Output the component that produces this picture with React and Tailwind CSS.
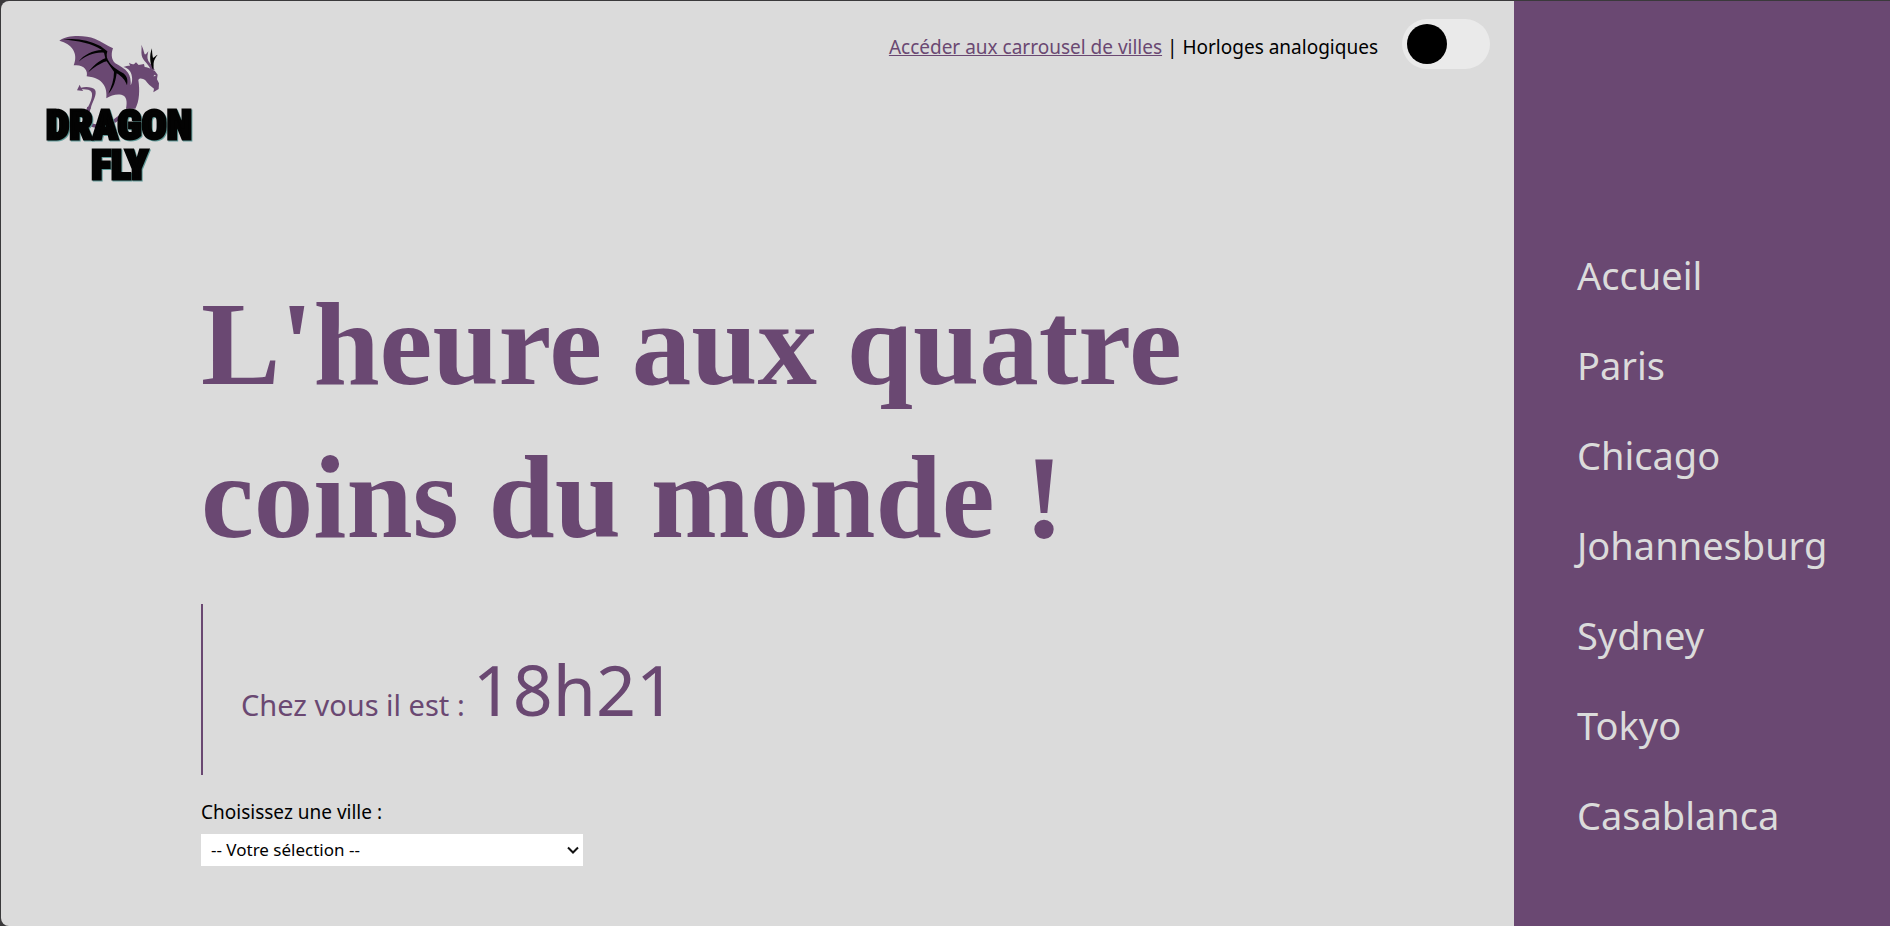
import { useState } from "react";

const cities = ["Paris", "Chicago", "Johannesburg", "Sydney", "Tokyo", "Casablanca"];

function Logo() {
  return (
    <svg viewBox="-3 -3 540 540" className="size-[180px]" role="img" aria-label="Dragon Fly">
      <g fill="#6a4872">
        <path d="M88 62C112 44 165 45 194 56C214 64 230 76 249 85C244 98 242 118 256 130C270 138 285 146 294 158C301 168 303 182 302 196C309 184 307 166 301 155C295 146 288 143 280 141C287 138 294 137 300 137L297 128C302 132 308 133 312 133L318 127L326 135L342 132L344 141C351 142 358 144 362 147L374 152L383 164L381 178L387 190L386 207L370 217L372 206C362 199 354 192 346 181C338 175 329 173 325 180C330 210 328 245 316 266H288C292 246 291 228 274 224C258 221 243 226 229 235C232 205 222 174 170 169C175 150 160 132 131 136C146 100 126 72 88 62Z" />
        <path d="M362 149C356 132 338 122 335 106C333 95 336 86 334 74C339 84 341 93 344 103C349 104 351 99 355 94C353 104 350 112 355 123C360 131 370 139 374 150Z" />
        <path d="M171 266C184 245 192 219 181 212C173 208 164 209 155 208L160 213L141 211L149 194L153 203C168 199 188 201 195 209C203 223 186 245 182 266Z" />
      </g>
      <path d="M177 262C166 294 175 320 202 318C233 317 251 307 274 288" fill="none" stroke="#6a4872" strokeWidth="11" />
      <path d="M370 169L378 168L374 164Z" fill="#dbdbdb" />
      <g fill="#030303">
        <path d="M99 59C137 53 175 60 211 78L222 86L232 94C228 107 230 117 239 128C249 143 266 151 280 160C292 169 294 181 291 196C285 180 278 171 260 160C257 180 252 205 235 221C245 199 252 178 252 155L230 124C208 130 192 143 175 157C187 139 206 123 226 115L222 98C191 96 169 107 146 125C160 105 188 91 216 90C187 70 143 61 99 59Z" />
        <path d="M369 149C360 132 357 106 366 85C366 96 367 104 369 114C374 111 376 107 383 104C377 111 374 118 372 123C369 133 373 141 369 149Z" />
      </g>
      <g
        className="drop-shadow-[3px_3px_0_#5f9a98]"
        textAnchor="middle"
        fontFamily="'Liberation Sans Narrow', 'Roboto Condensed', 'Liberation Sans', sans-serif"
        fontWeight="900"
        fontSize="124"
        fill="#030303"
        stroke="#030303"
        strokeWidth="9"
      >
        <text x="267" y="358">DRAGON</text>
        <text x="269" y="477">FLY</text>
      </g>
    </svg>
  );
}

export default function App() {
  const [analog, setAnalog] = useState(false);
  return (
    <div className="flex min-h-screen bg-[#3a393b] font-['Noto_Sans',sans-serif]">
      <div className="flex min-h-screen flex-1 border-t border-l border-[#3a393b]">
        <div className="flex-1 rounded-l-lg bg-[#dbdbdb]">
          <header className="flex items-start justify-between pt-[18px] pr-6 pl-7">
            <a href="#accueil">
              <Logo />
            </a>
            <div className="flex items-center gap-6 text-[19px]">
              <p className="pt-1.5">
                <a href="#carrousel" className="text-[#6a4872] underline">
                  Accéder aux carrousel de villes
                </a>{" "}
                | <label htmlFor="analog">Horloges analogiques</label>
              </p>
              <input
                id="analog"
                type="checkbox"
                role="switch"
                checked={analog}
                onChange={(e) => setAnalog(e.target.checked)}
                className="h-[50px] w-[88px] cursor-pointer appearance-none rounded-full bg-[#eaeaea] p-[5px] before:block before:size-10 before:rounded-full before:bg-black checked:before:ml-auto"
              />
            </div>
          </header>
          <main className="pt-[69px] pl-[200px]">
            <h1 className="max-w-[1100px] font-['Liberation_Serif',serif] text-[119px] leading-[153px] font-bold text-[#6a4872]">
              L'heure aux quatre coins du monde !
            </h1>
            <p className="mt-[30px] flex items-baseline gap-2 border-l-2 border-[#6a4872] py-9 pl-[38px] text-[29px] leading-none text-[#6a4872]">
              Chez vous il est :{" "}
              <time dateTime="18:21" className="text-[70px] leading-[99px]">
                18h21
              </time>
            </p>
            <div className="mt-6 flex w-[382px] flex-col gap-2">
              <label htmlFor="city" className="text-[19px] leading-[27px]">
                Choisissez une ville :
              </label>
              <div className="relative">
                <select
                  id="city"
                  className="block h-8 w-full appearance-none bg-white px-[10px] text-[17px] text-black"
                  defaultValue=""
                >
                  <option value="">-- Votre sélection --</option>
                  {cities.map((c) => (
                    <option key={c}>{c}</option>
                  ))}
                </select>
                <svg
                  viewBox="0 0 12 8"
                  className="pointer-events-none absolute top-3 right-1 h-2 w-3"
                  fill="none"
                  stroke="#111"
                  strokeWidth="2"
                >
                  <path d="M1 1.5L6 6.5L11 1.5" />
                </svg>
              </div>
            </div>
          </main>
        </div>
        <nav className="flex w-[376px] flex-col bg-[#6a4872] pt-[229px] pl-[63px]">
          {["Accueil", ...cities].map((c) => (
            <a key={c} href={"#" + c.toLowerCase()} className="text-[38px] leading-[90px] text-[#dbdbdb]">
              {c}
            </a>
          ))}
        </nav>
      </div>
    </div>
  );
}
